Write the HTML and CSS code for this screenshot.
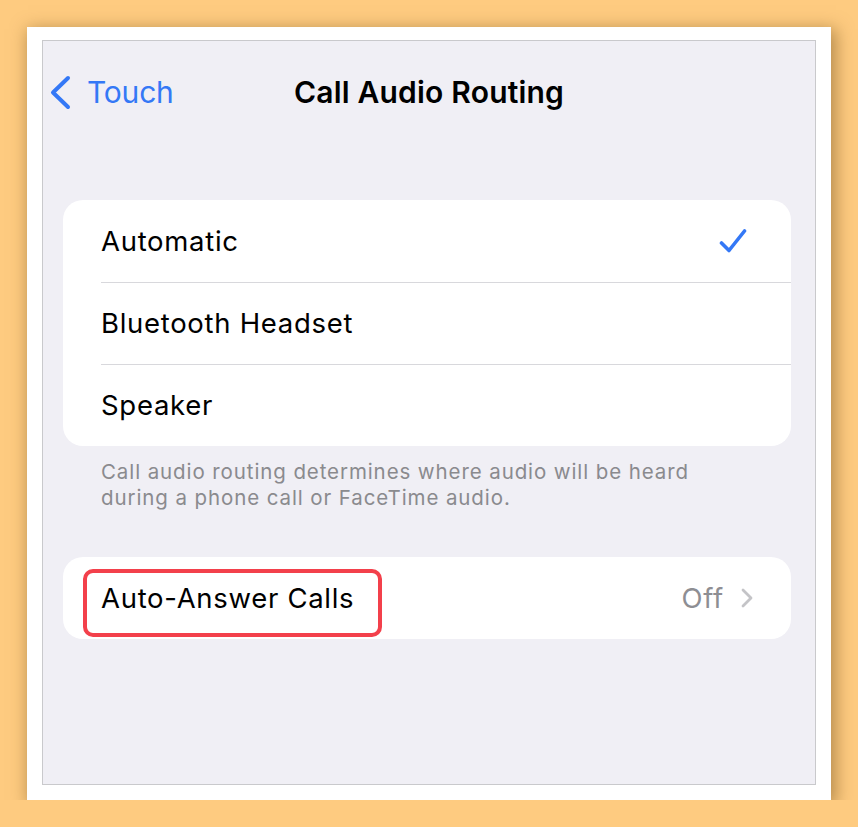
FILE: index.html
```html
<!DOCTYPE html>
<html lang="en">
<head>
  <meta charset="UTF-8">
  <title>Call Audio Routing</title>
  <link rel="stylesheet" href="styles.css">
</head>
<body>
  <div class="frame">
    <div class="screen">
      <div class="nav">
        <a class="back">
          <svg width="22" height="35" viewBox="0 0 22 35"><path d="M19 3 L4 17.5 L19 32" fill="none" stroke="#3478f6" stroke-width="4" stroke-linecap="round" stroke-linejoin="round"/></svg>
          <span>Touch</span>
        </a>
        <h1 class="title">Call Audio Routing</h1>
        <span></span>
      </div>

      <div class="card">
        <div class="row">
          <span class="label">Automatic</span>
          <svg class="check" width="28" height="26" viewBox="0 0 28 26"><path d="M2.5 15 L10 22.5 L25.5 3" fill="none" stroke="#3478f6" stroke-width="3.6" stroke-linecap="round" stroke-linejoin="round"/></svg>
        </div>
        <div class="row">
          <span class="label">Bluetooth Headset</span>
        </div>
        <div class="row">
          <span class="label">Speaker</span>
        </div>
      </div>
      <p class="note">Call audio routing determines where audio will be heard during a phone call or FaceTime audio.</p>

      <div class="card">
        <div class="row">
          <span class="label">Auto-Answer Calls</span>
          <span class="value">Off</span>
          <svg class="chevron" width="14" height="22" viewBox="0 0 14 22"><path d="M3 3 L11 11 L3 19" fill="none" stroke="#c4c4c7" stroke-width="2.8" stroke-linecap="round" stroke-linejoin="round"/></svg>
          <div class="highlight"></div>
        </div>
      </div>
    </div>
  </div>
</body>
</html>
```

FILE: styles.css
```css
body {
  margin: 0;
  background: #fecb80;
  font-family: Inter, "Noto Sans", sans-serif;
  padding: 27px 0 0 27px;
}

.frame {
  width: 804px;
  height: 773px;
  box-sizing: border-box;
  padding: 13px 15px 15px 15px;
  background: #fff;
  box-shadow: 3px 4px 16px 2px rgba(110, 75, 25, 0.5);
}

.screen {
  height: 100%;
  box-sizing: border-box;
  border: 1px solid #c9c9cc;
  background: #f0eff5;
}

.nav {
  height: 102px;
  display: grid;
  grid-template-columns: 1fr auto 1fr;
  align-items: center;
}

.back {
  display: flex;
  align-items: center;
  gap: 16px;
  padding-left: 6px;
  color: #3478f6;
  font-size: 30px;
  letter-spacing: -0.2px;
}

.back svg {
  display: block;
}

.title {
  margin: 0;
  font-size: 30px;
  font-weight: 600;
  letter-spacing: 0.2px;
  color: #000;
}

.card {
  width: 728px;
  margin-left: 20px;
  margin-top: 57px;
  background: #fff;
  border-radius: 20px;
  overflow: hidden;
}

.note + .card {
  margin-top: 46px;
}

.row {
  position: relative;
  height: 82px;
  display: flex;
  align-items: center;
  padding: 0 38px;
  font-size: 27.5px;
  letter-spacing: 0.7px;
  color: #000;
}

.row + .row::before {
  content: "";
  position: absolute;
  top: 0;
  left: 38px;
  right: 0;
  height: 1px;
  background: #d8d8dc;
}

.label {
  flex: 1;
}

.check {
  margin-right: 6px;
}

.value {
  color: #8e8e93;
  margin-right: 16px;
}

.chevron {
  margin-right: -1px;
}

.highlight {
  position: absolute;
  left: 20px;
  top: 12px;
  width: 299px;
  height: 68px;
  box-sizing: border-box;
  border: 4px solid #f3404b;
  border-radius: 10px;
}

.note {
  margin: 13px 0 0 58px;
  width: 640px;
  font-size: 20.5px;
  line-height: 26px;
  letter-spacing: 0.9px;
  color: #8a8a8e;
}
```
